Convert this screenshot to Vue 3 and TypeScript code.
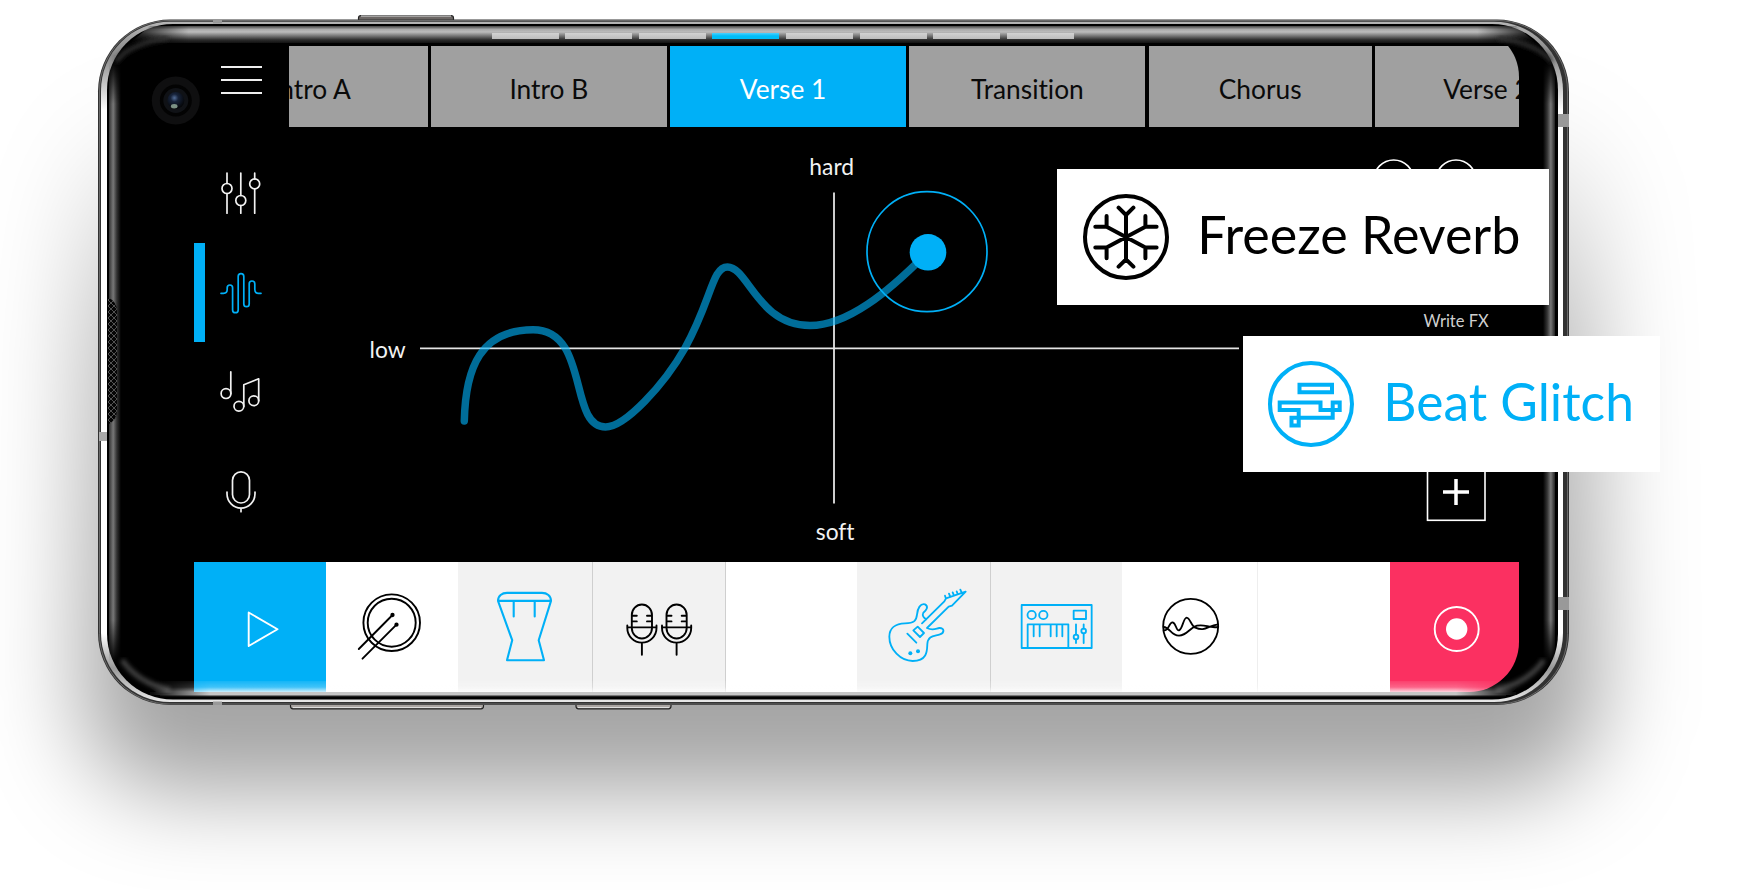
<script setup lang="ts">
interface Tab { label: string; width: number; active?: boolean; nudge?: string }
interface Tile { kind: string; width: number; tone: string }

const tabs: Tab[] = [
  { label: 'Intro A', width: 236, nudge: 'push' },
  { label: 'Intro B', width: 236 },
  { label: 'Verse 1', width: 236, active: true, nudge: 'pull' },
  { label: 'Transition', width: 236 },
  { label: 'Chorus', width: 223 },
  { label: 'Verse 2', width: 223 },
]

const segments = Array.from({ length: 8 }, (_, i) => i === 3)

const tiles: Tile[] = [
  { kind: 'play', width: 132, tone: 'blue' },
  { kind: 'drum', width: 132, tone: 'white' },
  { kind: 'djembe', width: 135, tone: 'grey line' },
  { kind: 'mics', width: 133, tone: 'grey line' },
  { kind: 'empty', width: 131, tone: 'white' },
  { kind: 'guitar', width: 134, tone: 'grey line' },
  { kind: 'keys', width: 131, tone: 'grey' },
  { kind: 'wave', width: 136, tone: 'white faint' },
  { kind: 'blank', width: 132, tone: 'white' },
  { kind: 'record', width: 129, tone: 'red' },
]
</script>

<template>
  <main class="stage">
    <svg class="frame" width="1756" height="890" viewBox="0 0 1756 890">
      <defs>
        <filter id="soft" x="-20%" y="-30%" width="140%" height="160%"><feGaussianBlur stdDeviation="47" /></filter>
        <filter id="edge" x="-10%" y="-10%" width="120%" height="120%"><feGaussianBlur stdDeviation="2" /></filter>
        <linearGradient id="shade" x1="0" y1="0" x2="0" y2="1">
          <stop offset="0" stop-color="#000" stop-opacity="0" />
          <stop offset=".35" stop-color="#000" stop-opacity=".27" />
          <stop offset="1" stop-color="#000" stop-opacity=".38" />
        </linearGradient>
        <linearGradient id="metal" x1="0" y1="0" x2="0" y2="1">
          <stop offset="0" stop-color="#b5b5b5" />
          <stop offset=".05" stop-color="#888" />
          <stop offset=".13" stop-color="#fff" />
          <stop offset=".9" stop-color="#fff" />
          <stop offset=".95" stop-color="#999" />
          <stop offset="1" stop-color="#e8e8e8" />
        </linearGradient>
        <linearGradient id="top" x1="0" y1="0" x2="0" y2="1">
          <stop offset="0" stop-color="#444" />
          <stop offset=".2" stop-color="#aaa" />
          <stop offset=".35" stop-color="#bcbcbc" />
          <stop offset=".6" stop-color="#707070" />
          <stop offset=".82" stop-color="#2b2b2b" />
          <stop offset="1" stop-color="#111" />
        </linearGradient>
        <linearGradient id="left" x1="0" y1="0" x2="1" y2="0">
          <stop offset="0" stop-color="#333" />
          <stop offset=".35" stop-color="#777" />
          <stop offset=".65" stop-color="#333" />
          <stop offset="1" stop-color="#000" />
        </linearGradient>
        <linearGradient id="right" x1="1" y1="0" x2="0" y2="0">
          <stop offset="0" stop-color="#222" />
          <stop offset=".35" stop-color="#777" />
          <stop offset=".65" stop-color="#333" />
          <stop offset="1" stop-color="#000" />
        </linearGradient>
        <linearGradient id="fadeX" x1="0" y1="0" x2="1" y2="0">
          <stop offset="0" stop-color="#000" />
          <stop offset=".045" stop-color="#fff" />
          <stop offset=".955" stop-color="#fff" />
          <stop offset="1" stop-color="#000" />
        </linearGradient>
        <linearGradient id="fadeY" x1="0" y1="0" x2="0" y2="1">
          <stop offset="0" stop-color="#000" />
          <stop offset=".07" stop-color="#fff" />
          <stop offset=".93" stop-color="#fff" />
          <stop offset="1" stop-color="#000" />
        </linearGradient>
        <mask id="maskX" maskUnits="userSpaceOnUse" x="125" y="20" width="1416" height="30">
          <rect x="125" y="20" width="1416" height="30" fill="url(#fadeX)" />
        </mask>
        <mask id="maskY" maskUnits="userSpaceOnUse" x="100" y="62" width="1470" height="600">
          <rect x="100" y="62" width="1470" height="600" fill="url(#fadeY)" />
        </mask>
        <radialGradient id="lens" cx=".42" cy=".35" r=".65">
          <stop offset="0" stop-color="#526c96" />
          <stop offset=".35" stop-color="#17233a" />
          <stop offset="1" stop-color="#050608" />
        </radialGradient>
        <pattern id="mesh" width="6" height="6" patternUnits="userSpaceOnUse">
          <path d="M0 0l6 6M6 0l-6 6" stroke="#666" stroke-width=".8" />
        </pattern>
      </defs>

      <rect x="82" y="100" width="1516" height="690" rx="90" fill="url(#shade)" filter="url(#soft)" />

      <g stroke="#222" stroke-width="1.2">
        <rect x="358.500" y="15.500" width="95" height="8" rx="2.500" fill="#6b6664" />
        <rect x="290.500" y="700" width="193" height="8.800" rx="2.500" fill="#aaa5a2" />
        <rect x="576" y="700" width="95" height="8.800" rx="2.500" fill="#aaa5a2" />
      </g>
      <path d="M361 16h90M293 707.500h188M578 707.500h91" stroke="#ddd" stroke-width="1" />

      <rect x="98" y="19.500" width="1471" height="685.500" rx="72" fill="#323232" />
      <rect x="99.500" y="20.500" width="1468" height="683.500" rx="70.500" fill="none" stroke="#777" stroke-width=".8" />
      <rect x="101" y="21.700" width="1462" height="680.300" rx="69" fill="url(#metal)" />
      <rect x="107" y="24" width="1451" height="675.500" rx="66" fill="#000" />

      <g mask="url(#maskX)"><path d="M150 26H1516L1536 43H130Z" fill="url(#top)" /></g>
      <g mask="url(#maskY)">
        <rect x="109" y="62" width="12" height="600" fill="url(#left)" />
        <rect x="1543" y="62" width="12" height="600" fill="url(#right)" />
      </g>
      <path d="M116 62Q128 44 168 38M1552 62Q1538 44 1498 38" fill="none" stroke="#333" stroke-width="4" filter="url(#edge)" />

      <path d="M108 297.500q9 4 9 14v98q0 11-9 15Z" fill="#050505" />
      <path d="M108 297.500q9 4 9 14v98q0 11-9 15Z" fill="url(#mesh)" />
      <g fill="#999">
        <rect x="213" y="20" width="9" height="3.500" />
        <rect x="213" y="701.500" width="9" height="3.500" />
        <rect x="99" y="432" width="8" height="9" fill="#aaa" />
        <rect x="1558" y="114" width="11" height="13" />
        <rect x="1558" y="597" width="11" height="13" />
      </g>

      <circle cx="175.800" cy="100.500" r="24" fill="#0f0f10" />
      <circle cx="175.800" cy="100.500" r="16" fill="#030303" />
      <circle cx="175.800" cy="100.500" r="12.500" fill="#101216" />
      <circle cx="175.800" cy="100.500" r="8.500" fill="url(#lens)" />
      <ellipse cx="174.200" cy="106.200" rx="3.300" ry="2.200" fill="#8fa898" opacity=".85" />
    </svg>

    <section class="screen">
      <div class="segments">
        <i v-for="(on, i) in segments" :key="i" :class="{ on }"></i>
      </div>
      <div class="body">
        <nav class="rail">
          <button class="menu" aria-label="Menu"><span></span><span></span><span></span></button>
          <button class="item" aria-label="Mixer">
            <svg width="44" height="44" viewBox="219.500 171.500 44 44">
              <path d="M227.500 173.500v10.300M227.500 194v19.700M241.300 173.500v22.500M241.300 206v7.700M255.200 173.500v6M255.200 189.500v24.200" />
              <circle cx="227.500" cy="189" r="5" /><circle cx="241.300" cy="201" r="5" /><circle cx="255.200" cy="184.400" r="5" />
            </svg>
          </button>
          <button class="item active" aria-label="Sound pad">
            <svg width="44" height="44" viewBox="219.500 271.200 44 44">
              <path d="M221.500 293.500h2.500q3.700 0 3.700-3.700v-1.900a2.700 2.700 0 0 1 5.400 0v22.200a2.800 2.800 0 0 0 5.600 0v-33.400a2.800 2.800 0 0 1 5.600 0v27.500a2.700 2.700 0 0 0 5.400 0v-20.200a2.800 2.800 0 0 1 5.600 0v5.800q0 3.700 3.700 3.700h2.500" />
            </svg>
          </button>
          <button class="item" aria-label="Notes">
            <svg width="44" height="44" viewBox="219.500 370.700 44 44">
              <path d="M231.300 372.500v22M244.300 407v-21.600l14.900-5.900v22" />
              <circle cx="226.500" cy="394.300" r="4.900" /><circle cx="239.400" cy="407" r="4.900" /><circle cx="254.300" cy="401.500" r="4.900" />
            </svg>
          </button>
          <button class="item" aria-label="Microphone">
            <svg width="44" height="44" viewBox="219.500 469.500 44 44">
              <rect x="233" y="472.300" width="17" height="31.200" rx="8.500" />
              <path d="M227.500 492.500v1.800a14 14.300 0 0 0 28 0v-1.800M241.500 508.600v3.600" />
            </svg>
          </button>
        </nav>
        <div class="main">
          <div class="tabs">
            <div v-for="tab in tabs" :key="tab.label" class="tab" :class="[tab.nudge, { active: tab.active }]" :style="{ width: tab.width + 'px' }">{{ tab.label }}</div>
          </div>
          <svg class="pad" width="1230" height="435" viewBox="289 127 1230 435">
            <path d="M420 348.300H1239M834 192.500V503.500" stroke="#e4e4e4" stroke-width="1.800" />
            <path class="trace" d="M464.300 421C465.500 367 481 330 533 329.700C590 329.700 568 427 605.500 427C625 427 664 385 685 348C712 299 712 267 727.500 267C748 267 758 325.500 810 325.500C848 325.500 889 291 924 256" />
            <circle cx="927" cy="251.700" r="60" fill="none" stroke="#00b0f7" stroke-width="1.700" />
            <circle cx="928" cy="252.300" r="18.300" fill="#00b0f7" />
            <g class="labels">
              <text x="854" y="175" text-anchor="end">hard</text>
              <text x="854.500" y="540" text-anchor="end">soft</text>
              <text x="369.500" y="358">low</text>
            </g>
            <g fill="none" stroke="#fff" stroke-width="1.600">
              <circle cx="1393.700" cy="180" r="20" /><circle cx="1456" cy="180" r="20" />
              <rect x="1427.500" y="462" width="57.500" height="58.300" />
              <path d="M1443 492h26M1456 479v26" stroke-width="3.500" />
            </g>
            <text class="small" x="1423.500" y="326.700">Write FX</text>
          </svg>
        </div>
      </div>
      <div class="tiles">
        <div v-for="tile in tiles" :key="tile.kind" class="tile" :class="tile.tone" :style="{ width: tile.width + 'px' }">
          <svg v-if="tile.kind === 'play'" width="132" height="130" viewBox="194.500 562 132 130" class="light">
            <path d="M249.200 612.500L278 629.200L249.200 646Z" />
          </svg>
          <svg v-else-if="tile.kind === 'drum'" width="132" height="130" viewBox="326.500 562 132 130">
            <circle cx="392.200" cy="622.700" r="28.300" /><circle cx="392.200" cy="622.700" r="24" />
            <path d="M393 615L359.300 649M397 624.700L363 658.700" />
            <circle cx="393" cy="615" r="1.200" /><circle cx="397" cy="624.700" r="1.200" />
          </svg>
          <svg v-else-if="tile.kind === 'djembe'" width="134" height="130" viewBox="458 561.500 134 130" class="cyan">
            <path d="M498 600.400c0-5 4-8 9-8h35c5 0 9 3 9 8ZM498 600.400L512.200 639.700L507 659.700H544L538.700 639.700L551 600.400M513.700 600.400V616M534.700 600.400V616" />
          </svg>
          <svg v-else-if="tile.kind === 'mics'" width="132" height="130" viewBox="593 562 132 130">
            <g v-for="dx in [0, 34.7]" :key="dx" :transform="`translate(${dx} 0)`">
              <path d="M631.800 615a10.100 10.500 0 0 1 20.200 0v13a10.100 10.500 0 0 1-20.200 0ZM627.300 625.500v2.500a14.600 14.600 0 0 0 29.200 0v-2.500M627.300 627.400h29.200M641.900 642.700v12M631.800 615.700h5M652 615.700h-5M631.800 621.400h5M652 621.400h-5" />
            </g>
          </svg>
          <svg v-else-if="tile.kind === 'guitar'" width="133" height="130" viewBox="-9 36 399 390" class="cyan triple">
            <path d="M186 220L253 154L258 145L317 125L276 167L266 170L201 234C218 243 227 236 238 234C254 233 254 249 240 253C223 259 204 256 202 282C201 299 204 333 158 333C122 333 88 299 88 260C88 235 106 221 135 220C164 220 169 211 171 194C173 174 181 160 195 163C207 170 199 181 190 188C186 196 191 204 199 208M255 137l3 9M267 131l4 10M278 127l4 10M290 124l3 9M301 119l4 9" />
            <path d="M173 230L192 249L180 261L160 241ZM142 251L169 278" />
            <g class="dots"><circle cx="151" cy="310" r="6" /><circle cx="174" cy="304" r="6" /></g>
          </svg>
          <svg v-else-if="tile.kind === 'keys'" width="131" height="130" viewBox="393 36 393 390" class="cyan triple">
            <path d="M485 165H695V294H485ZM641 182H678V207H641ZM503 294V223H625V294M521 223v36M539 223v36M572 223v36M590 223v36M607 223v36M648 223v31M648 268v11M671 223v13M671 250v29" />
            <circle cx="515" cy="195" r="12.500" /><circle cx="550" cy="195" r="12.500" />
            <circle cx="648" cy="261" r="7" /><circle cx="671" cy="243" r="7" />
          </svg>
          <svg v-else-if="tile.kind === 'wave'" width="135" height="130" viewBox="786 36 405 390" class="triple">
            <circle cx="992" cy="229" r="82.500" />
            <path d="M911 241C927 245 927 215 938 217C949 220 948 243 957 241C968 237 970 203 980 203C990 204 994 228 1006 233C1035 246 1043 227 1074 223M911 231C930 232 932 256 957 257C982 256 989 233 1011 227C1038 222 1044 235 1074 231" />
          </svg>
          <svg v-else-if="tile.kind === 'record'" width="129" height="130" viewBox="1390 562 129 130" class="light">
            <circle cx="1456.700" cy="629" r="22" /><circle cx="1456.700" cy="629" r="10.700" fill="#fff" stroke="none" />
          </svg>
        </div>
      </div>
    </section>

    <svg class="glare" width="1756" height="890" viewBox="0 0 1756 890">
      <defs>
        <linearGradient id="shine" x1="0" y1="0" x2="0" y2="1">
          <stop offset="0" stop-color="#fff" stop-opacity=".08" />
          <stop offset=".55" stop-color="#fff" stop-opacity=".25" />
          <stop offset="1" stop-color="#fff" stop-opacity=".8" />
        </linearGradient>
        <linearGradient id="ends" x1="0" y1="0" x2="1" y2="0">
          <stop offset="0" stop-color="#000" />
          <stop offset=".02" stop-color="#111" />
          <stop offset=".06" stop-color="#fff" />
          <stop offset=".94" stop-color="#fff" />
          <stop offset=".98" stop-color="#111" />
          <stop offset="1" stop-color="#000" />
        </linearGradient>
        <mask id="endMask" maskUnits="userSpaceOnUse" x="125" y="670" width="1416" height="35">
          <rect x="125" y="670" width="1416" height="35" fill="url(#ends)" />
        </mask>
      </defs>
      <path d="M122 660Q138 683 170 690M1544 660Q1528 683 1496 690" fill="none" stroke="#777" stroke-opacity=".55" stroke-width="5" filter="url(#edge)" />
      <g mask="url(#endMask)">
        <path d="M140 681H1526L1512 692H156Z" fill="url(#shine)" />
        <path d="M150 693.500H1516" stroke="#c6c6c6" stroke-width="3" />
        <path d="M160 695.600H1506" stroke="#777" stroke-width="1.200" />
      </g>
    </svg>

    <aside class="card freeze">
      <svg width="88" height="88" viewBox="1081.400 193 88 88">
        <circle cx="1125.400" cy="237" r="41" />
        <path d="M1125.400 214v46M1118 207.700l7.400 7.300l7.400-7.300M1118 266.700l7.400-7.300l7.400 7.300M1106 226.700l38.800 20.800M1106 247.500l38.800-20.800M1094.700 226.700H1106V216M1156 226.700H1144.800V216M1094.700 247.500H1106V258.300M1156 247.500H1144.800V258.300" />
      </svg>
      <span>Freeze Reverb</span>
    </aside>
    <aside class="card beat">
      <svg width="88" height="88" viewBox="1267.300 360 88 88">
        <circle cx="1311.300" cy="404" r="41" />
        <path d="M1299.800 384.700H1332.300V392.300H1299.800ZM1280 402.400H1320.800V410H1340V402.400H1333V417.800H1291.800V425.400H1299V410H1280Z" />
      </svg>
      <span>Beat Glitch</span>
    </aside>
  </main>
</template>

<style>
body { margin: 0; background: #fff; }
</style>

<style scoped>
.stage {
  position: relative;
  display: grid;
  width: 1756px;
  height: 890px;
  overflow: hidden;
  background: #fff;
  font-family: Lato, "Open Sans", sans-serif;
  font-variant-ligatures: none;
}
.frame, .screen, .glare { grid-area: 1 / 1; }
.frame, .glare { display: block; }
.glare { pointer-events: none; z-index: 1; }
.screen {
  display: flex;
  flex-direction: column;
  width: 1324.500px;
  height: 665px;
  margin: 27px 0 0 194px;
  border-radius: 0 50px 50px 0;
  overflow: hidden;
  z-index: 1;
}
.segments {
  display: flex;
  gap: 6.600px;
  height: 13px;
  padding: 6px 0 0 297.700px;
}
.segments i { width: 67px; height: 6px; background: linear-gradient(#d2d2d2, #bdbdbd); }
.segments .on { background: linear-gradient(#4bd0ff, #00bdf8 50%); }
.body { display: flex; height: 516px; }
.rail { display: flex; flex-direction: column; width: 95px; flex: none; }
button { border: 0; padding: 0; background: none; font: inherit; }
.menu {
  display: flex;
  flex-direction: column;
  align-items: center;
  gap: 11px;
  height: 97.500px;
  padding-top: 20px;
  box-sizing: border-box;
}
.menu span { width: 41px; height: 2px; background: #eee; }
.item {
  display: flex;
  align-items: center;
  justify-content: center;
  height: 99.400px;
  border-left: 11px solid transparent;
  padding-right: 12px;
}
.item.active { border-color: #00b0f7; }
.item svg { fill: none; stroke: #f1f1f1; stroke-width: 1.700; stroke-linecap: round; stroke-linejoin: round; }
.item.active svg { stroke: #00b0f7; }
.main { width: 1229.500px; overflow: hidden; }
.tabs { display: flex; gap: 3.300px; height: 81px; margin-left: -97.500px; width: 1420px; }
.tab {
  display: flex;
  align-items: center;
  justify-content: center;
  flex: none;
  padding-top: 4px;
  box-sizing: border-box;
  background: #a0a0a0;
  color: #0a0a0a;
  font-size: 26.300px;
  white-space: nowrap;
}
.tab.active { background: #00b0f7; color: #fff; }
.tab.push { padding-left: 4px; }
.tab.pull { padding-right: 10px; }
.pad { display: block; }
.trace { fill: none; stroke: #00b0f7; stroke-opacity: .62; stroke-width: 7.500; stroke-linecap: round; }
.labels { fill: #f2f2f2; font-size: 22.800px; }
.small { fill: #cfcfcf; font-size: 16.500px; }
.tiles { display: flex; height: 130px; width: 1325px; }
.tile { flex: none; height: 130px; box-sizing: border-box; overflow: hidden; }
.tile.white { background: #fff; }
.tile.grey { background: #f2f2f2; }
.tile.line { border-right: 1px solid #cfcfcf; }
.tile.faint { border-right: 1px solid #eee; }
.tile.blue { background: #00b0f7; }
.tile.red { background: #fb3061; }
.tile svg { display: block; fill: none; stroke: #000; stroke-width: 1.900; stroke-linecap: round; stroke-linejoin: round; }
.tile svg.cyan { stroke: #00b0f7; stroke-width: 2.100; }
.tile svg.light { stroke: #fff; }
.tile svg.triple { stroke-width: 5.500; }
.dots { fill: #00b0f7; stroke: none; }
.card {
  position: absolute;
  display: flex;
  align-items: center;
  box-sizing: border-box;
  height: 136px;
  background: #fff;
  font-size: 52px;
  white-space: nowrap;
  z-index: 2;
}
.card span { padding-bottom: 6px; }
.card svg { flex: none; fill: none; stroke-width: 4; stroke-linecap: round; stroke-linejoin: round; }
.freeze { left: 1057px; top: 169.300px; width: 492px; padding-left: 24.800px; gap: 27.500px; color: #000; }
.freeze svg { stroke: #000; }
.beat { left: 1243px; top: 336px; width: 417px; padding-left: 24.300px; gap: 28px; color: #00b0f7; font-size: 51.500px; }
.beat svg { stroke: #00b0f7; stroke-linejoin: miter; }
</style>
